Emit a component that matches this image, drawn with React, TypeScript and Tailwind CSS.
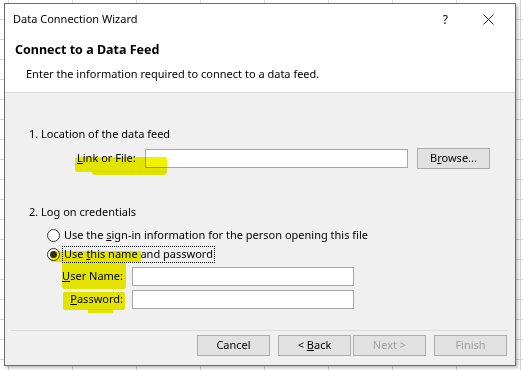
import React from "react";

const font = { fontFamily: '"Noto Sans", "Liberation Sans", sans-serif' };

function Radio({ checked }: { checked?: boolean }) {
  return (
    <span className="flex h-[13px] w-[13px] items-center justify-center rounded-full border border-[#333333] bg-white">
      {checked && <span className="h-[7px] w-[7px] rounded-full bg-[#333333]" />}
    </span>
  );
}

function Btn({ children, disabled, className = "" }: { children: React.ReactNode; disabled?: boolean; className?: string }) {
  return (
    <div
      className={`flex h-[21px] w-[73px] items-center justify-center border border-[#adadad] bg-[#e1e1e1] text-[11px] ${disabled ? "text-[#a0a0a0]" : "text-black"} ${className}`}
    >
      <span>{children}</span>
    </div>
  );
}

function Highlight({ className }: { className: string }) {
  return <div className={`pointer-events-none absolute bg-[#f2f200] mix-blend-multiply ${className}`} />;
}

export default function App() {
  return (
    <div
      className="relative h-[370px] w-[523px] overflow-hidden bg-white bg-[linear-gradient(to_right,#d4d4d4_1px,transparent_1px),linear-gradient(to_bottom,#d4d4d4_1px,transparent_1px)] bg-[length:64px_20px] bg-[position:8px_19px] pl-[4px] pt-[3px] text-black"
      style={font}
    >
      <div className="flex h-[363px] w-[512px] flex-col border border-[#6b6b6b] bg-[#f0f0f0] shadow-[2px_2px_3px_rgba(0,0,0,0.25)]">
        {/* title bar */}
        <div className="flex h-[31px] items-center bg-white pl-[8px] text-[11px]">
          <span>Data Connection Wizard</span>
          <span className="ml-auto mr-[35px] text-[12px]">?</span>
          <svg width="11" height="11" viewBox="0 0 11 11" className="mr-[21px]">
            <path d="M0.5 0.5L10.5 10.5M10.5 0.5L0.5 10.5" stroke="#222" strokeWidth="1" />
          </svg>
        </div>
        {/* header */}
        <div className="flex h-[58px] flex-col border-b border-[#d9d9d9] bg-white">
          <div className="flex h-[31px] items-center pl-[10px] text-[12.5px] font-bold">Connect to a Data Feed</div>
          <div className="flex h-[16px] items-center pl-[21px] text-[11px]">Enter the information required to connect to a data feed.</div>
        </div>
        {/* body */}
        <div className="flex flex-1 flex-col text-[11px]">
          <div className="mt-[33px] flex h-[16px] items-center pl-[24px]">1. Location of the data feed</div>
          <div className="mt-[5px] flex h-[22px] items-center">
            <span className="ml-[72px] w-[68px]">
              <u>L</u>ink or File:
            </span>
            <div className="h-[19px] w-[263px] border border-[#a6a6a6] bg-white" />
            <Btn className="ml-[9px]">
              B<u>r</u>owse...
            </Btn>
          </div>
          <div className="mt-[35px] flex h-[16px] items-center pl-[24px]">2. Log on credentials</div>
          <div className="mt-[7px] flex h-[16px] items-center pl-[42px]">
            <Radio />
            <span className="ml-[4px]">
              Use the <u>s</u>ign-in information for the person opening this file
            </span>
          </div>
          <div className="mt-[3px] flex h-[17px] items-center pl-[42px]">
            <Radio checked />
            <span className="ml-[2px] flex h-[17px] items-center border border-dotted border-black px-[1px]">
              <span>
                Use <u>t</u>his name and password
              </span>
            </span>
          </div>
          <div className="mt-[4px] flex h-[18px] items-center">
            <span className="w-[118px] text-right">
              <u>U</u>ser Name:
            </span>
            <div className="ml-[9px] h-[19px] w-[222px] border border-[#a6a6a6] bg-white" />
          </div>
          <div className="mt-[5px] flex h-[18px] items-center">
            <span className="w-[118px] text-right">
              <u>P</u>assword:
            </span>
            <div className="ml-[9px] h-[19px] w-[222px] border border-[#a6a6a6] bg-white" />
          </div>
          <div className="ml-[6px] mr-[7px] mt-[22px] h-px bg-[#dcdcdc]" />
          <div className="mt-[4px] flex items-center">
            <Btn className="ml-[192px]">Cancel</Btn>
            <Btn className="ml-[8px]">
              &lt; <u>B</u>ack
            </Btn>
            <Btn className="ml-[2px]" disabled>
              Next &gt;
            </Btn>
            <Btn className="ml-[8px]" disabled>
              Finish
            </Btn>
          </div>
        </div>
      </div>

      {/* marker highlights */}
      <Highlight className="left-[75px] top-[157px] h-[15px] w-[92px] rounded-[2px]" />
      <Highlight className="left-[92px] top-[171px] h-[4px] w-[75px] rounded-b-[3px]" />
      <Highlight className="left-[51px] top-[251px] h-[11px] w-[90px] rounded-[2px]" />
      <Highlight className="left-[62px] top-[262px] h-[27px] w-[64px] rounded-b-[3px]" />
      <Highlight className="left-[63px] top-[292px] h-[18px] w-[62px] rounded-[2px]" />
      <Highlight className="left-[88px] top-[309px] h-[4px] w-[25px]" />
    </div>
  );
}
